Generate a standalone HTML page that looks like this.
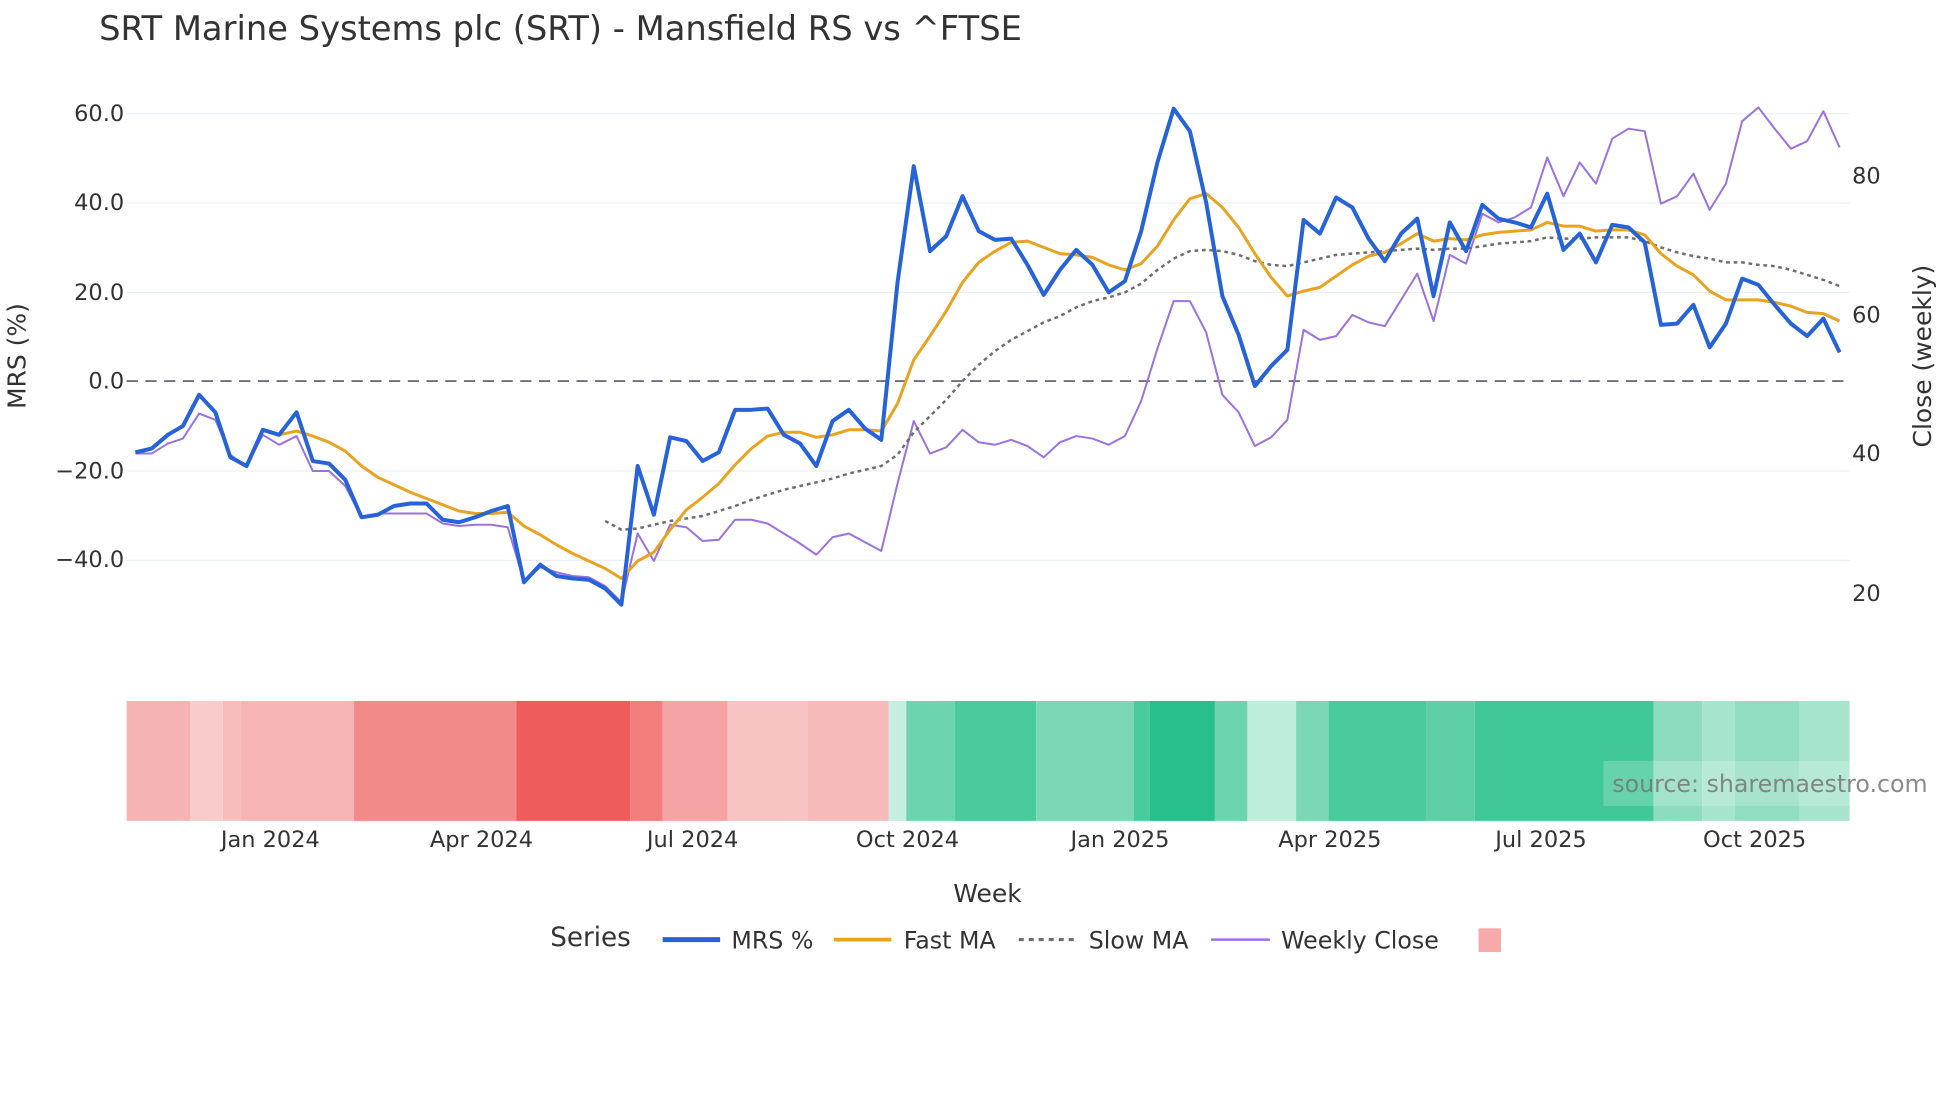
<!DOCTYPE html>
<html><head><meta charset="utf-8"><style>
html,body{margin:0;padding:0;background:#fff;width:1960px;height:1102px;overflow:hidden}
svg{display:block}
text{font-family:"DejaVu Sans","Liberation Sans",sans-serif;fill:#2a3f5f}
</style></head><body>
<svg width="1960" height="1102" viewBox="0 0 1568 882" xmlns="http://www.w3.org/2000/svg">
<rect width="1568" height="882" fill="#fff"/>
<text x="79" y="32" font-size="27" style="fill:#333">SRT Marine Systems plc (SRT) - Mansfield RS vs ^FTSE</text>
<g stroke="#ebf0f8" stroke-width="1">
<line x1="101" x2="1480" y1="91" y2="91"/><line x1="101" x2="1480" y1="162.5" y2="162.5"/>
<line x1="101" x2="1480" y1="234" y2="234"/><line x1="101" x2="1480" y1="377" y2="377"/>
<line x1="101" x2="1480" y1="448.5" y2="448.5"/>
</g>
<line x1="101" x2="1480" y1="305" y2="305" stroke="#6b6f80" stroke-width="1.5" stroke-dasharray="9,6"/>
<g font-size="18" text-anchor="end">
<text x="99" y="97" style="fill:#333">60.0</text><text x="99" y="168" style="fill:#333">40.0</text>
<text x="99" y="240" style="fill:#333">20.0</text><text x="99" y="311" style="fill:#333">0.0</text>
<text x="99" y="383" style="fill:#333">−20.0</text><text x="99" y="454" style="fill:#333">−40.0</text>
</g>
<g font-size="18">
<text x="1482" y="147" style="fill:#333">80</text><text x="1482" y="258" style="fill:#333">60</text>
<text x="1482" y="369" style="fill:#333">40</text><text x="1482" y="481" style="fill:#333">20</text>
</g>
<text transform="translate(20,285) rotate(-90)" font-size="20" text-anchor="middle" style="fill:#333">MRS (%)</text>
<text transform="translate(1545,285) rotate(-90)" font-size="20" text-anchor="middle" style="fill:#333">Close (weekly)</text>
<polyline fill="none" stroke="#9b72e0" stroke-width="1.6" stroke-linejoin="round" points="108,363 121,363 134,355 146,351 159,331 172,336 184,364 197,373 210,348 223,356 237,349 250,377 263,377 276,389 289,414 302,411 315,411 328,411 341,411 354,419 367,421 380,420 393,420 406,422 419,465 432,454 445,458 458,461 471,462 484,469 497,482 510,427 523,449 536,420 549,422 562,433 575,432 588,416 601,416 614,419 627,427 640,435 653,444 666,430 679,427 692,434 705,441 718,387 731,337 744,363 757,358 770,344 783,354 796,356 809,352 822,357 835,366 848,354 861,349 874,351 887,356 900,349 913,321 926,279 939,241 952,241 965,266 978,316 991,330 1004,357 1017,350 1030,336 1043,264 1056,272 1069,269 1082,252 1095,258 1108,261 1121,240 1134,219 1147,257 1160,204 1173,211 1186,171 1199,178 1212,174 1225,166 1238,126 1251,157 1264,130 1277,147 1290,111 1303,103 1316,105 1329,163 1342,157 1355,139 1368,168 1381,147 1394,97 1407,86 1420,103 1433,119 1446,113 1459,89 1472,118"/>
<polyline fill="none" stroke="#6e6e6e" stroke-width="2" stroke-dasharray="3,3" points="484,417 497,424 510,423 523,420 536,417 549,415 562,413 575,409 588,405 601,400 614,396 627,392 640,389 653,386 666,383 679,379 692,376 705,373 718,364 731,346 744,333 757,320 770,305 783,292 796,281 809,272 822,265 835,258 848,253 861,246 874,241 887,238 900,234 913,227 926,216 939,207 952,201 965,200 978,201 991,204 1004,209 1017,212 1030,213 1043,210 1056,207 1069,204 1082,203 1095,202 1108,201 1121,200 1134,199 1147,200 1160,199 1173,199 1186,197 1199,195 1212,194 1225,193 1238,190 1251,191 1264,191 1277,190 1290,190 1303,190 1316,193 1329,198 1342,202 1355,205 1368,207 1381,210 1394,210 1407,212 1420,213 1433,216 1446,220 1459,224 1472,229"/>
<polyline fill="none" stroke="#e8a320" stroke-width="2.4" stroke-linejoin="round" points="223,348 237,345 250,349 263,354 276,361 289,373 302,382 315,388 328,394 341,399 354,404 367,409 380,411 393,411 406,410 419,421 432,428 445,436 458,443 471,449 484,455 497,463 510,449 523,442 536,424 549,408 562,398 575,387 588,372 601,359 614,349 627,346 640,346 653,350 666,348 679,344 692,344 705,345 718,323 731,288 744,269 757,249 770,226 783,210 796,201 809,194 822,193 835,198 848,203 861,204 874,206 887,212 900,216 913,211 926,197 939,176 952,159 965,155 978,166 991,182 1004,203 1017,222 1030,237 1043,233 1056,230 1069,221 1082,212 1095,205 1108,202 1121,195 1134,187 1147,193 1160,191 1173,192 1186,188 1199,186 1212,185 1225,184 1238,178 1251,181 1264,181 1277,185 1290,184 1303,184 1316,188 1329,203 1342,213 1355,220 1368,233 1381,240 1394,240 1407,240 1420,242 1433,245 1446,250 1459,251 1472,257"/>
<polyline fill="none" stroke="#2763d8" stroke-width="3.2" stroke-linejoin="round" points="108,362 121,359 134,348 146,341 159,316 172,330 184,366 197,373 210,344 223,348 237,330 250,369 263,371 276,384 289,414 302,412 315,405 328,403 341,403 354,416 367,418 380,414 393,409 406,405 419,466 432,452 445,461 458,463 471,464 484,471 497,484 510,373 523,412 536,350 549,353 562,369 575,362 588,328 601,328 614,327 627,348 640,355 653,373 666,337 679,328 692,343 705,352 718,226 731,133 744,201 757,189 770,157 783,185 796,192 809,191 822,212 835,236 848,216 861,200 874,212 887,234 900,225 913,185 926,130 939,87 952,105 965,162 978,237 991,268 1004,309 1017,293 1030,280 1043,176 1056,187 1069,158 1082,166 1095,191 1108,209 1121,187 1134,175 1147,237 1160,178 1173,201 1186,164 1199,175 1212,178 1225,182 1238,155 1251,200 1264,187 1277,210 1290,180 1303,182 1316,194 1329,260 1342,259 1355,244 1368,278 1381,259 1394,223 1407,228 1420,244 1433,259 1446,269 1459,255 1472,282"/>
<g>
<rect x="101" y="561" width="51" height="96" fill="#f6b3b3"/>
<rect x="152" y="561" width="26" height="96" fill="#f9cccc"/>
<rect x="178" y="561" width="14" height="96" fill="#f7bcbc"/>
<rect x="192" y="561" width="91" height="96" fill="#f7b5b6"/>
<rect x="283" y="561" width="130" height="96" fill="#f28a8a"/>
<rect x="413" y="561" width="91" height="96" fill="#ef5c5c"/>
<rect x="504" y="561" width="26" height="96" fill="#f27d7d"/>
<rect x="530" y="561" width="52" height="96" fill="#f6a3a3"/>
<rect x="582" y="561" width="64" height="96" fill="#f8c3c3"/>
<rect x="646" y="561" width="65" height="96" fill="#f7baba"/>
<rect x="711" y="561" width="14" height="96" fill="#c6eee0"/>
<rect x="725" y="561" width="39" height="96" fill="#6dd4b0"/>
<rect x="764" y="561" width="65" height="96" fill="#4acb9d"/>
<rect x="829" y="561" width="78" height="96" fill="#7cd7b6"/>
<rect x="907" y="561" width="13" height="96" fill="#4acb9d"/>
<rect x="920" y="561" width="52" height="96" fill="#27bf8b"/>
<rect x="972" y="561" width="26" height="96" fill="#6dd4b0"/>
<rect x="998" y="561" width="39" height="96" fill="#bfeddc"/>
<rect x="1037" y="561" width="26" height="96" fill="#7cd7b6"/>
<rect x="1063" y="561" width="78" height="96" fill="#4acb9d"/>
<rect x="1141" y="561" width="39" height="96" fill="#5fcfa6"/>
<rect x="1180" y="561" width="143" height="96" fill="#41c898"/>
<rect x="1323" y="561" width="39" height="96" fill="#8ddcbf"/>
<rect x="1362" y="561" width="26" height="96" fill="#a6e4cd"/>
<rect x="1388" y="561" width="52" height="96" fill="#91ddc1"/>
<rect x="1440" y="561" width="40" height="96" fill="#a6e4cd"/>
</g>
<rect x="1283" y="609" width="197" height="36" fill="#fff" fill-opacity="0.2"/>
<text x="1290" y="634" font-size="19" style="fill:#777;fill-opacity:0.85">source: sharemaestro.com</text>
<g font-size="18" text-anchor="middle">
<text x="216" y="678" style="fill:#333">Jan 2024</text><text x="385" y="678" style="fill:#333">Apr 2024</text>
<text x="554" y="678" style="fill:#333">Jul 2024</text><text x="726" y="678" style="fill:#333">Oct 2024</text>
<text x="896" y="678" style="fill:#333">Jan 2025</text><text x="1064" y="678" style="fill:#333">Apr 2025</text>
<text x="1233" y="678" style="fill:#333">Jul 2025</text><text x="1404" y="678" style="fill:#333">Oct 2025</text>
</g>
<text x="790" y="722" font-size="20" text-anchor="middle" style="fill:#333">Week</text>
<text x="440" y="757" font-size="21" style="fill:#333">Series</text>
<line x1="530" x2="576" y1="752" y2="752" stroke="#2763d8" stroke-width="4"/>
<text x="585" y="759" font-size="19" style="fill:#333">MRS %</text>
<line x1="667" x2="713" y1="752" y2="752" stroke="#e8a320" stroke-width="3"/>
<text x="723" y="759" font-size="19" style="fill:#333">Fast MA</text>
<line x1="815" x2="860" y1="752" y2="752" stroke="#6e6e6e" stroke-width="2.5" stroke-dasharray="4,4"/>
<text x="871" y="759" font-size="19" style="fill:#333">Slow MA</text>
<line x1="969" x2="1016" y1="752" y2="752" stroke="#9b72e0" stroke-width="2"/>
<text x="1025" y="759" font-size="19" style="fill:#333">Weekly Close</text>
<rect x="1183" y="743" width="18" height="19" fill="#f6aaaa"/>
</svg>
</body></html>
